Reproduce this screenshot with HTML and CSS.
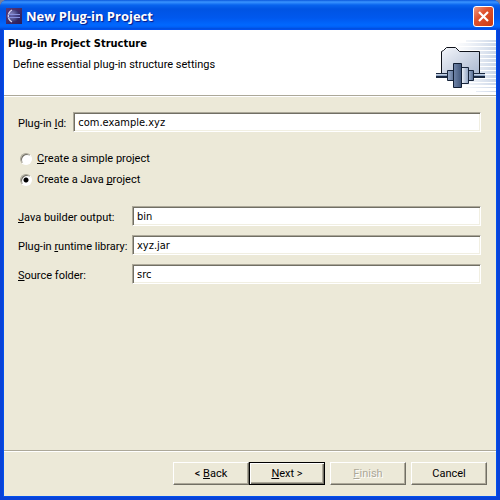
FILE: index.html
```html
<!DOCTYPE html>
<html lang="en">
<head>
<meta charset="utf-8">
<meta name="viewport" content="width=device-width, initial-scale=1">
<title>New Plug-in Project</title>
<link rel="stylesheet" href="styles.css">
</head>
<body>
<form class="window">
  <header class="titlebar">
    <svg class="app-icon" width="16" height="16" viewBox="0 0 16 16" aria-hidden="true">
      <defs>
        <linearGradient id="night" x1="0" y1="0" x2="1" y2="1">
          <stop offset="0" stop-color="#5a3a78"/><stop offset="1" stop-color="#2a1c58"/>
        </linearGradient>
        <radialGradient id="moon" cx=".3" cy=".4" r=".7">
          <stop offset="0" stop-color="#8a8ac8"/><stop offset="1" stop-color="#26235f"/>
        </radialGradient>
      </defs>
      <path fill="url(#night)" d="M0 0h16v16H0z"/>
      <circle cx="8" cy="8" r="6" fill="url(#moon)"/>
      <path d="M6 2C1 5 1 11 6 14" fill="none" stroke="#d4d4f4" stroke-width="1.3"/>
      <path d="M2 6.5h12M2 9.5h12" stroke="#8790dc"/>
      <path d="M3 8h11" stroke="#3e3a83"/>
    </svg>
    <h1 class="title">New Plug-in Project</h1>
    <button type="button" class="close" aria-label="Close">
      <svg width="11" height="11" viewBox="0 0 11 11" aria-hidden="true"><path d="M1 1l9 9M10 1l-9 9" stroke="#fff" stroke-width="2.2"/></svg>
    </button>
  </header>
  <main class="content">
    <section class="banner">
      <div class="banner-text">
        <h2>Plug-in Project Structure</h2>
        <p>Define essential plug-in structure settings</p>
      </div>
      <svg class="banner-art" width="75" height="65" viewBox="421 30 75 65" aria-hidden="true">
        <defs>
          <linearGradient id="fade"><stop offset="0" stop-color="#dce4f0" stop-opacity="0"/><stop offset="1" stop-color="#ccd7e8"/></linearGradient>
          <linearGradient id="folder" x1="0" y1="0" x2="1" y2="1"><stop offset="0" stop-color="#f4f6fb"/><stop offset="1" stop-color="#a9b7cf"/></linearGradient>
          <linearGradient id="dark"><stop offset="0" stop-color="#7186aa"/><stop offset="1" stop-color="#3f5478"/></linearGradient>
          <linearGradient id="mid"><stop offset="0" stop-color="#9dafcb"/><stop offset="1" stop-color="#566b91"/></linearGradient>
          <linearGradient id="light"><stop offset="0" stop-color="#edf2fa"/><stop offset="1" stop-color="#8fa2c1"/></linearGradient>
        </defs>
        <path fill="url(#fade)" d="M466 40h30v2h-30zM456 43h40v3h-40zM456 47h40v3h-40zM460 51h36v3h-36zM460 55h36v3h-36zM460 59h36v3h-36zM460 63h36v3h-36zM460 67h36v3h-36zM460 71h36v3h-36zM460 75h36v3h-36zM455 79h41v3h-41zM452 83h44v2h-44zM466 87h30v1h-30zM476 91h20v1h-20z"/>
        <path fill="url(#folder)" d="M441.500 75V51.500l2-1 3-3h9l4 4h20V75z"/>
        <path fill="none" stroke="#10131b" d="M441.500 75V51.500l2-1 3-3h9l4 4h20V75"/>
        <path fill="#1b2940" d="M436 73h13v5h-13zM472 73h13v5h-13z"/>
        <path fill="#8fa4c4" d="M436 75h13v1h-13zM472 75h13v1h-13z"/>
        <path fill="#c5d1e2" d="M436 74h12v1h-12zM473 74h12v1h-12z"/>
        <path fill="url(#mid)" stroke="#17243a" d="M447.500 70.500h7v10h-7z"/>
        <path fill="url(#mid)" stroke="#17243a" d="M468.500 70.500h5v10h-5z"/>
        <path fill="url(#light)" stroke="#17243a" d="M461.500 67.500h7v16h-7z"/>
        <path fill="url(#dark)" stroke="#101d33" d="M453.500 63.500h8v24h-8z"/>
      </svg>
    </section>
    <section class="fields">
      <div class="id-row">
        <label for="plugin-id">Plug-in <u>I</u>d:</label>
        <input class="text" id="plugin-id" type="text" value="com.example.xyz">
      </div>
      <div class="choices" role="radiogroup" aria-label="Project type">
        <label class="choice"><input type="radio" name="kind"><span><u>C</u>reate a simple project</span></label>
        <label class="choice"><input type="radio" name="kind" checked><span>Create a Java <u>p</u>roject</span></label>
      </div>
      <div class="settings">
        <label for="output"><u>J</u>ava builder output:</label>
        <input class="text" id="output" type="text" value="bin">
        <label for="library">Plug-in <u>r</u>untime library:</label>
        <input class="text" id="library" type="text" value="xyz.jar">
        <label for="source"><u>S</u>ource folder:</label>
        <input class="text" id="source" type="text" value="src">
      </div>
    </section>
    <footer class="actions">
      <div class="pair">
        <button type="button" class="push">&lt; <u>B</u>ack</button>
        <button type="submit" class="push default"><u>N</u>ext &gt;</button>
      </div>
      <button type="button" class="push" disabled><u>F</u>inish</button>
      <button type="button" class="push">Cancel</button>
    </footer>
  </main>
</form>
</body>
</html>
```
FILE: styles.css
```css
* { box-sizing: border-box; }
body {
  margin: 0;
  background: #78809a;
  color: #000;
  font: 11px/14px Tahoma, Roboto, sans-serif;
}
h1, h2, p { margin: 0; }
input, button { font: inherit; color: inherit; }
u { text-decoration-skip-ink: none; text-underline-offset: 1px; }
.window {
  min-height: 100vh;
  display: flex;
  flex-direction: column;
  background: #0842d8;
  border-radius: 7px 7px 0 0;
  overflow: hidden;
}
.titlebar {
  height: 30px;
  display: flex;
  align-items: center;
  gap: 4px;
  padding: 2px 6px 0;
  background: linear-gradient(#0a57dc 0, #3a94ff 2px, #0864ee 5px, #0054e3 9px, #0058ee 18px, #0068ff 25px, #0060f8 27px, #0040cb 30px);
}
.title {
  flex: 1;
  color: #fff;
  font: bold 13px/18px "Trebuchet MS", "Open Sans", sans-serif;
  text-shadow: 1px 1px 1px #0a1883;
}
.close {
  width: 21px;
  height: 21px;
  padding: 0;
  display: grid;
  place-items: center;
  border: 1px solid #fff;
  border-radius: 3px;
  background: linear-gradient(135deg, #f09a80, #e0522e 40%, #c93a10);
}
.content {
  flex: 1;
  display: flex;
  flex-direction: column;
  margin: 0 4px 4px;
  background: #ece9d8;
  box-shadow: 0 0 0 1px #0050ee;
}
.banner {
  display: flex;
  justify-content: space-between;
  background: #fff;
  border-bottom: 1px solid #aca899;
}
.banner-text { padding: 7px 4px; }
.banner-text h2 { font: bold 11px/14px Tahoma, "DejaVu Sans Condensed", sans-serif; }
.banner-text p { padding: 7px 5px 0; }
.banner-art { display: block; }
.fields {
  flex: 1;
  border-top: 1px solid #fff;
  padding: 15px 15px 20px 14px;
}
.id-row { display: flex; align-items: center; gap: 7px; }
.id-row label, .settings label { padding-top: 3px; white-space: nowrap; }
.text {
  flex: 1;
  min-width: 0;
  width: 100%;
  height: 20px;
  padding: 0 4px;
  border: 1px solid;
  border-color: #aca899 #fff #fff #aca899;
  border-radius: 0;
  background: #fff;
  box-shadow: inset 1px 1px #716f64, inset -1px -1px #f1efe2;
  outline: 0;
  font-family: Tahoma, "DejaVu Sans Condensed", sans-serif;
}
.choices { display: grid; gap: 7px; padding: 20px 2px 19px; }
.choice { display: flex; align-items: center; gap: 5px; }
.choice input {
  appearance: none;
  width: 12px;
  height: 12px;
  margin: 0;
  border: 1px solid;
  border-color: #aca899 #fff #fff #aca899;
  border-radius: 50%;
  background: #fff;
  box-shadow: inset 1px 1px #716f64;
}
.choice input:checked { background: radial-gradient(circle, #000 2px, #fff 3px); }
.settings {
  display: grid;
  grid-template-columns: 109px 1fr;
  align-items: center;
  gap: 9px 5px;
}
.actions {
  display: flex;
  justify-content: flex-end;
  gap: 5px;
  padding: 11px 9px;
  border-top: 1px solid #aca899;
  box-shadow: inset 0 1px #fff;
}
.pair { display: flex; }
.push {
  width: 76px;
  height: 23px;
  padding: 0;
  border: 1px solid;
  border-color: #fff #716f64 #716f64 #fff;
  border-radius: 0;
  background: #ece9d8;
  box-shadow: inset -1px -1px #aca899;
}
.default {
  border-color: #000;
  box-shadow: inset 1px 1px #fff, inset -1px -1px #716f64, inset -2px -2px #aca899;
}
.push:disabled { color: #aca899; text-shadow: 1px 1px #fff; }
```
